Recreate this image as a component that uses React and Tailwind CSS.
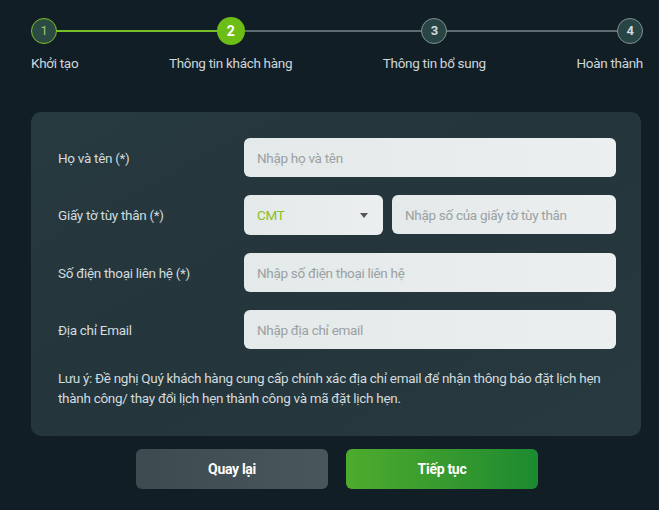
import { useState } from 'react';

const steps = [
  { n: 1, label: 'Khởi tạo', state: 'done', align: 'items-start' },
  { n: 2, label: 'Thông tin khách hàng', state: 'active', align: 'items-center' },
  { n: 3, label: 'Thông tin bổ sung', state: 'todo', align: 'items-center' },
  { n: 4, label: 'Hoàn thành', state: 'todo', align: 'items-end' },
];

function Circle({ n, state }) {
  if (state === 'done') return <div className="w-[26px] h-[26px] rounded-full border border-[#7cc225] bg-[#2b4a44] text-[#9cc76a] text-[13px] flex items-center justify-center">{n}</div>;
  if (state === 'active') return <div className="w-[28px] h-[28px] -my-px rounded-full bg-[#6dbd17] text-white font-bold text-[14px] flex items-center justify-center">{n}</div>;
  return <div className="w-[26px] h-[26px] rounded-full border border-[#7f9292] bg-[#284445] text-[#d2dada] font-bold text-[13px] flex items-center justify-center">{n}</div>;
}

function Field({ label, children }) {
  return (
    <div className="flex items-center">
      <div className="w-[186px] shrink-0 text-[13.5px] text-[#d3dbde]">{label}</div>
      <div className="flex-1 flex gap-[9px]">{children}</div>
    </div>
  );
}

function Input({ placeholder }) {
  return (
    <input placeholder={placeholder} className="flex-1 min-w-0 h-[39px] rounded-[6px] bg-gradient-to-r from-[#e4e9e9] to-[#eceff0] px-[13px] text-[13.5px] text-[#333] placeholder:text-[#9aa1a4] outline-none" />
  );
}

export default function App() {
  const [idType] = useState('CMT');
  return (
    <div className="w-[659px] h-[510px] bg-[#121e25] overflow-hidden" style={{ fontFamily: 'Roboto, "Noto Sans", sans-serif' }}>
      <div className="relative ml-[31px] mr-[16px] pt-[18px] flex justify-between tracking-[-0.3px]">
        <div className="absolute left-[13px] right-[15px] top-[30px] h-[2px] bg-[#5d6b70]" />
        <div className="absolute left-[13px] w-[186px] top-[30px] h-[2px] bg-[#76c026]" />
        {steps.map(s => (
          <div key={s.n} className={`relative flex flex-col ${s.align}`}>
            <Circle n={s.n} state={s.state} />
            <div className="mt-[9px] text-[13.5px] text-[#cdd6da] whitespace-nowrap">{s.label}</div>
          </div>
        ))}
      </div>

      <div className="mt-[39px] ml-[31px] w-[610px] rounded-[10px] bg-gradient-to-br from-[#273a40] via-[#24353b] to-[#283a3f] pl-[27px] pr-[25px] pt-[26px] pb-[28px] tracking-[-0.3px]">
        <div className="flex flex-col gap-[18px]">
          <Field label="Họ và tên (*)"><Input placeholder="Nhập họ và tên" /></Field>
          <Field label="Giấy tờ tùy thân (*)">
            <div className="w-[139px] h-[40px] rounded-[6px] bg-gradient-to-r from-[#e4e9e9] to-[#eceff0] pl-[13px] pr-[15px] flex items-center justify-between">
              <span className="text-[13.5px] text-[#8cbf1e]">{idType}</span>
              <svg width="8" height="5" viewBox="0 0 8 5"><path d="M0 0h8L4 5z" fill="#555" /></svg>
            </div>
            <Input placeholder="Nhập số của giấy tờ tùy thân" />
          </Field>
          <Field label="Số điện thoại liên hệ (*)"><Input placeholder="Nhập số điện thoại liên hệ" /></Field>
          <Field label="Địa chỉ Email"><Input placeholder="Nhập địa chỉ email" /></Field>
        </div>
        <p className="mt-[19px] text-[13.5px] leading-[20px] text-[#d3dbde]">
          Lưu ý: Đề nghị Quý khách hàng cung cấp chính xác địa chỉ email để nhận thông báo đặt lịch hẹn thành công/ thay đổi lịch hẹn thành công và mã đặt lịch hẹn.
        </p>
      </div>

      <div className="mt-[13px] ml-[136px] flex gap-[18px]">
        <button className="w-[192px] h-[40px] rounded-[6px] bg-gradient-to-r from-[#3d4b51] to-[#48575c] text-white font-bold text-[14px] tracking-[-0.3px]">Quay lại</button>
        <button className="w-[192px] h-[40px] rounded-[6px] bg-gradient-to-r from-[#4dab2c] to-[#1b8a30] text-white font-bold text-[14px] tracking-[-0.3px]">Tiếp tục</button>
      </div>
    </div>
  );
}
